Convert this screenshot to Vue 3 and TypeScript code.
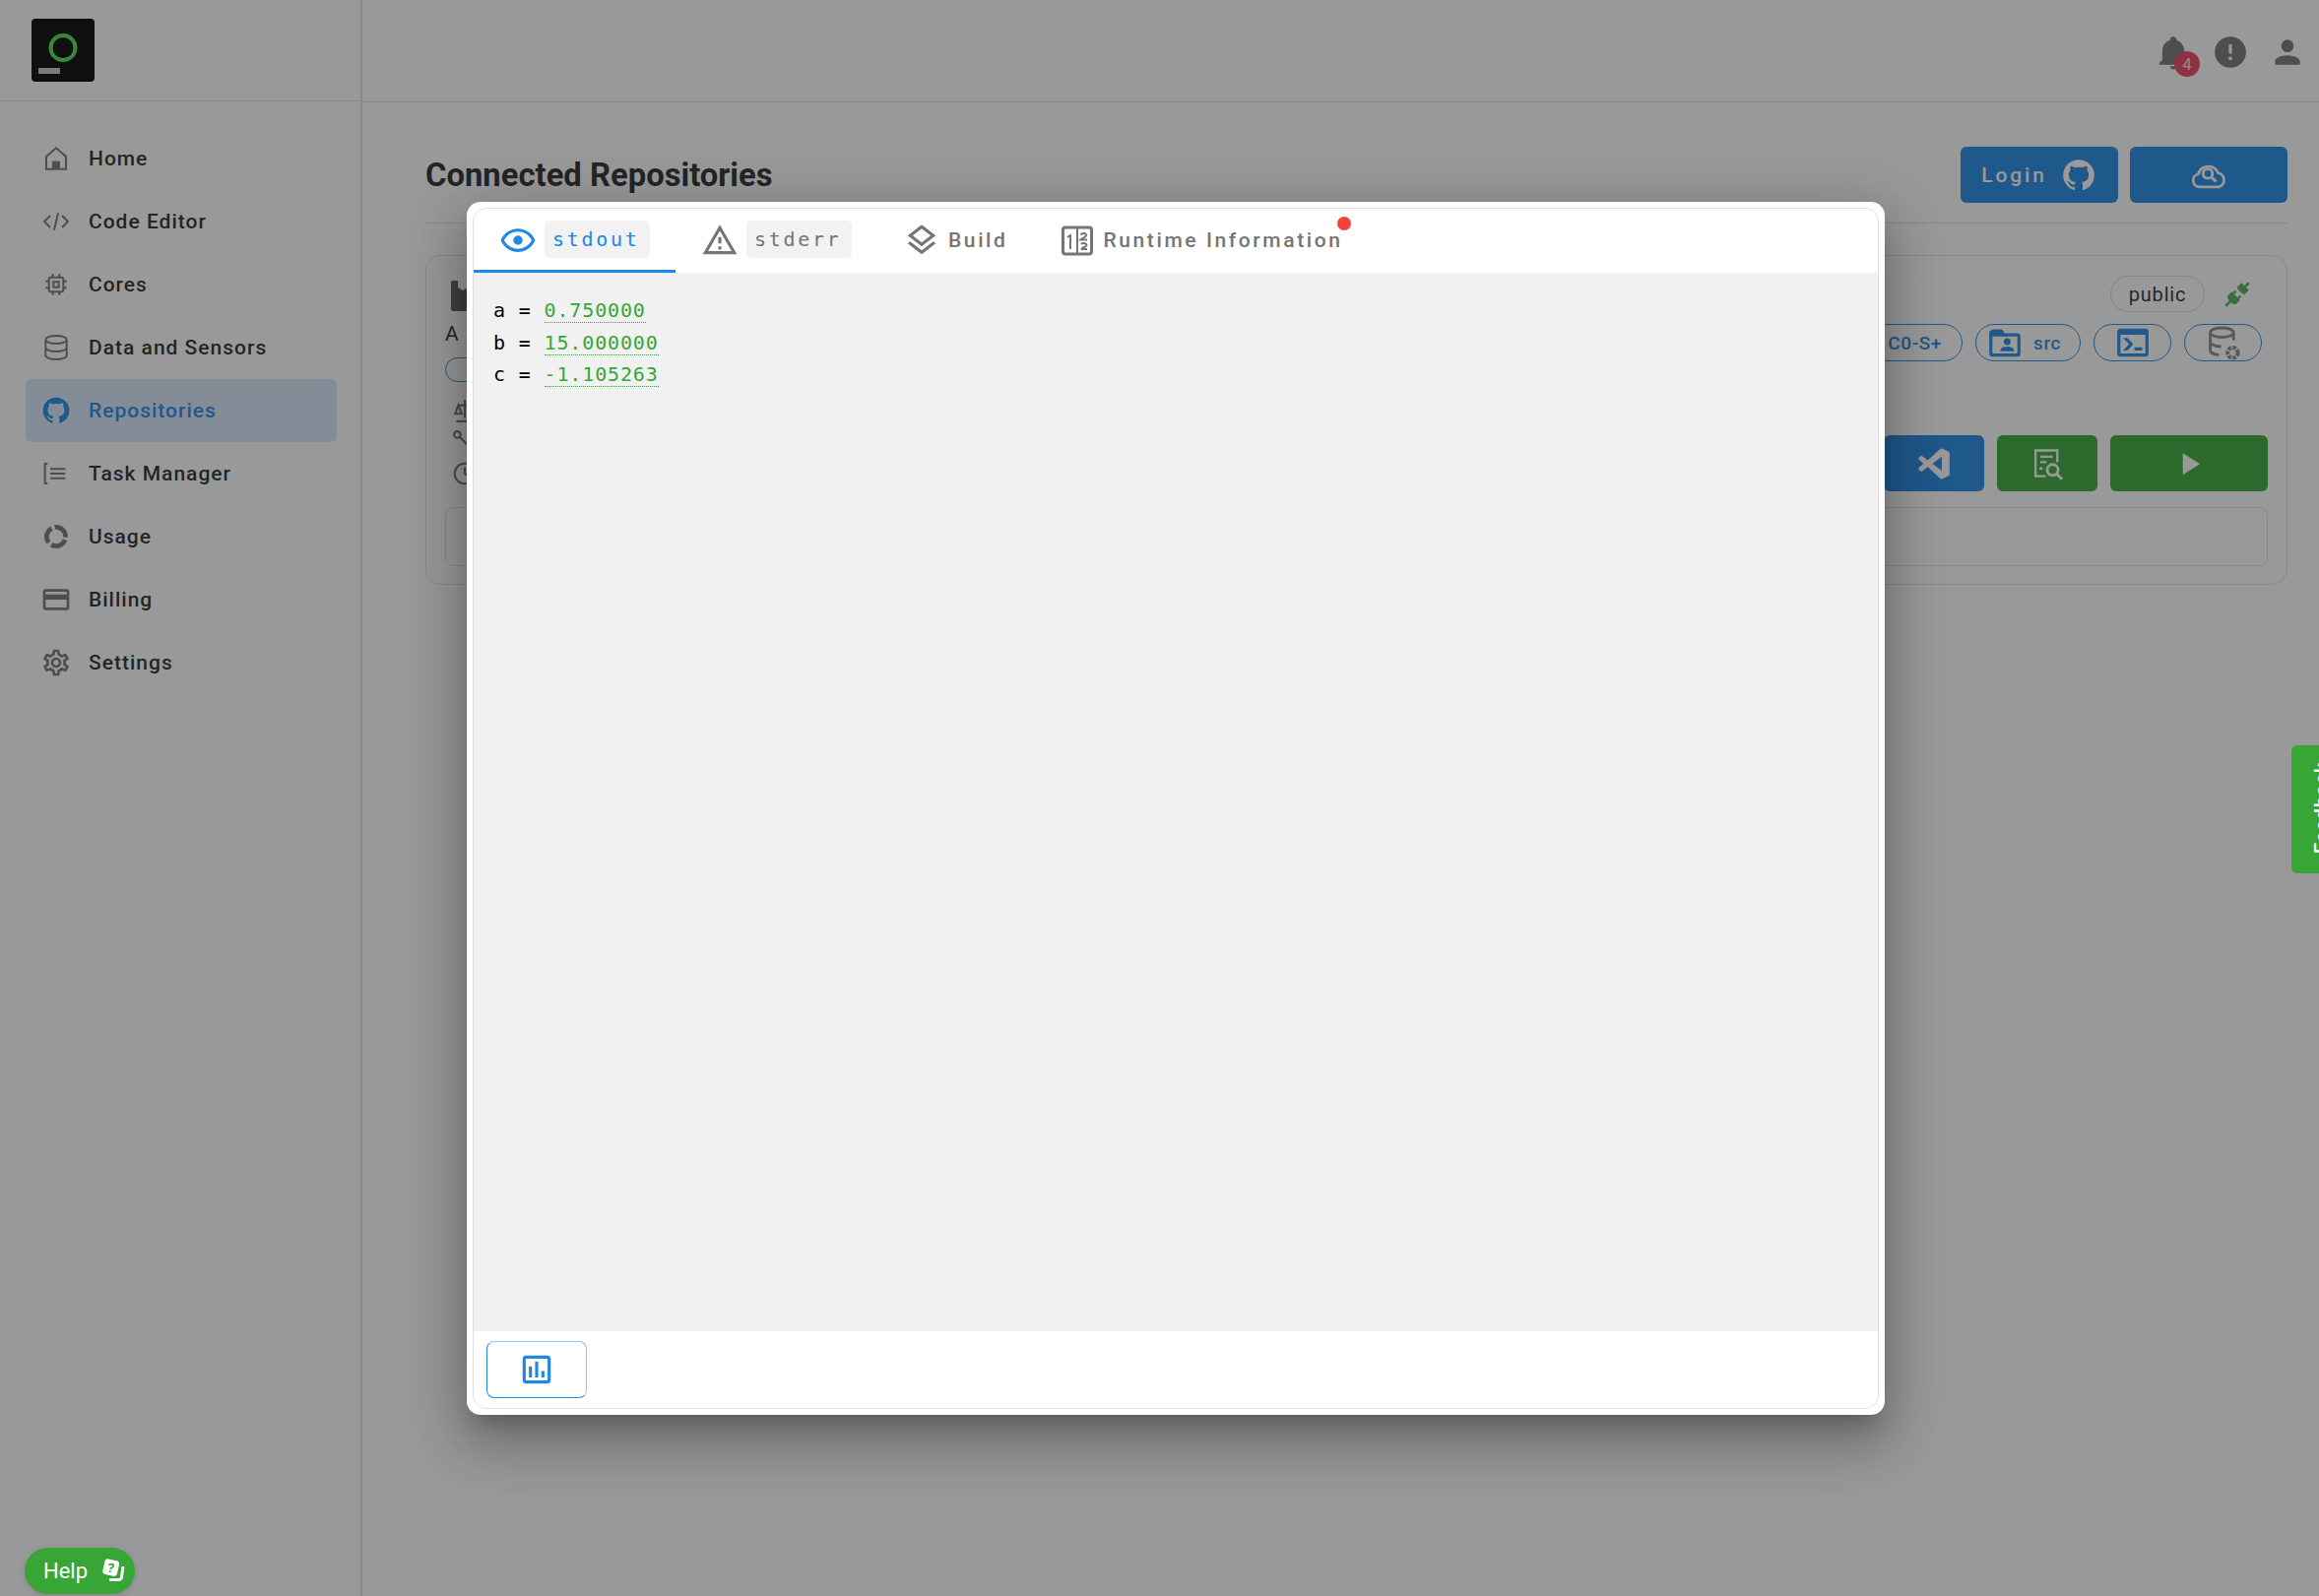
<script setup lang="ts">
interface NavItem { label: string; fill?: string; stroke?: string; active?: boolean; dash?: boolean }

const github = 'M12,2A10,10 0 0,0 2,12C2,16.42 4.87,20.17 8.84,21.5C9.34,21.58 9.5,21.27 9.5,21C9.5,20.77 9.5,20.14 9.5,19.31C6.73,19.91 6.14,17.97 6.14,17.97C5.68,16.81 5.03,16.5 5.03,16.5C4.12,15.88 5.1,15.9 5.1,15.9C6.1,15.97 6.63,16.93 6.63,16.93C7.5,18.45 8.97,18 9.54,17.76C9.63,17.11 9.89,16.67 10.17,16.42C7.95,16.17 5.62,15.31 5.62,11.5C5.62,10.39 6,9.5 6.65,8.79C6.55,8.54 6.2,7.5 6.75,6.15C6.75,6.15 7.59,5.88 9.5,7.17C10.29,6.95 11.15,6.84 12,6.84C12.85,6.84 13.71,6.95 14.5,7.17C16.41,5.88 17.25,6.15 17.25,6.15C17.8,7.5 17.45,8.54 17.35,8.79C18,9.5 18.38,10.39 18.38,11.5C18.38,15.32 16.04,16.16 13.81,16.41C14.17,16.72 14.5,17.33 14.5,18.26C14.5,19.6 14.5,20.68 14.5,21C14.5,21.27 14.66,21.59 15.17,21.5C19.14,20.16 22,16.42 22,12A10,10 0 0,0 12,2Z'

const nav: NavItem[] = [
  { label: 'Home', stroke: 'M4.5 20V10.5L12 4l7.5 6.5V20z', fill: 'M9 20v-6h6v6z' },
  { label: 'Code Editor', stroke: 'M7.5 7.5 3 12l4.5 4.5M16.5 7.5 21 12l-4.5 4.5M13.5 5.5l-3 13' },
  { label: 'Cores', stroke: 'M8 6.5h8a1.5 1.5 0 0 1 1.5 1.5v8a1.5 1.5 0 0 1-1.5 1.5H8A1.5 1.5 0 0 1 6.5 16V8A1.5 1.5 0 0 1 8 6.5zM10 10h4v4h-4zM9.5 6.5V4M14.5 6.5V4M9.5 20v-2.5M14.5 20v-2.5M4 9.5h2.5M4 14.5h2.5M17.5 9.5H20M17.5 14.5H20' },
  { label: 'Data and Sensors', stroke: 'M4 6c0-1.7 3.6-3 8-3s8 1.3 8 3-3.6 3-8 3-8-1.3-8-3zM4 6v12c0 1.7 3.6 3 8 3s8-1.3 8-3V6M4 12c0 1.7 3.6 3 8 3s8-1.3 8-3' },
  { label: 'Repositories', fill: github, active: true },
  { label: 'Task Manager', stroke: 'M5.5 4.5H3.5v15h2M7.5 8.5H19M7.5 12H19M7.5 15.5H19' },
  { label: 'Usage', dash: true },
  { label: 'Billing', fill: 'M20,8H4V6H20M20,18H4V12H20M20,4H4C2.89,4 2,4.89 2,6V18C2,19.11 2.89,20 4,20H20C21.11,20 22,19.11 22,18V6C22,4.89 21.11,4 20,4Z' },
  { label: 'Settings', fill: 'M12,8A4,4 0 0,1 16,12A4,4 0 0,1 12,16A4,4 0 0,1 8,12A4,4 0 0,1 12,8M12,10A2,2 0 0,0 10,12A2,2 0 0,0 12,14A2,2 0 0,0 14,12A2,2 0 0,0 12,10M10,22C9.75,22 9.54,21.82 9.5,21.58L9.13,18.93C8.5,18.68 7.96,18.34 7.44,17.94L4.95,18.95C4.73,19.03 4.46,18.95 4.34,18.73L2.34,15.27C2.21,15.05 2.27,14.78 2.46,14.63L4.57,12.97L4.5,12L4.57,11L2.46,9.37C2.27,9.22 2.21,8.95 2.34,8.73L4.34,5.27C4.46,5.05 4.73,4.96 4.95,5.05L7.44,6.05C7.96,5.66 8.5,5.32 9.13,5.07L9.5,2.42C9.54,2.18 9.75,2 10,2H14C14.25,2 14.46,2.18 14.5,2.42L14.87,5.07C15.5,5.32 16.04,5.66 16.56,6.05L19.05,5.05C19.27,4.96 19.54,5.05 19.66,5.27L21.66,8.73C21.79,8.95 21.73,9.22 21.54,9.37L19.43,11L19.5,12L19.43,13L21.54,14.63C21.73,14.78 21.79,15.05 21.66,15.27L19.66,18.73C19.54,18.95 19.27,19.04 19.05,18.95L16.56,17.95C16.04,18.34 15.5,18.68 14.87,18.93L14.5,21.58C14.46,21.82 14.25,22 14,22H10M11.25,4L10.88,6.61C9.68,6.86 8.62,7.5 7.85,8.39L5.44,7.35L4.69,8.65L6.8,10.2C6.4,11.37 6.4,12.64 6.8,13.8L4.68,15.36L5.43,16.66L7.86,15.62C8.63,16.5 9.68,17.14 10.87,17.38L11.24,20H12.76L13.13,17.39C14.32,17.14 15.37,16.5 16.14,15.62L18.57,16.66L19.32,15.36L17.2,13.81C17.6,12.64 17.6,11.37 17.2,10.2L19.31,8.65L18.56,7.35L16.15,8.39C15.38,7.5 14.32,6.86 13.12,6.62L12.75,4H11.25Z' },
]

const outputs = [
  { name: 'a', value: '0.750000' },
  { name: 'b', value: '15.000000' },
  { name: 'c', value: '-1.105263' },
]
</script>

<template>
  <div class="page">
    <aside class="sidebar">
      <div class="logo-bar">
        <svg class="logo" viewBox="0 0 64 64">
          <rect width="64" height="64" rx="4" fill="#000" />
          <circle cx="32" cy="29.500" r="12.500" fill="none" stroke="#4ae050" stroke-width="4" />
          <rect x="7" y="50" width="22" height="6" fill="#fff" opacity="0.8" />
        </svg>
      </div>
      <nav class="nav">
        <a v-for="item in nav" :key="item.label" class="nav-item" :class="{ active: item.active }">
          <svg class="nav-icon" viewBox="0 0 24 24">
            <path v-if="item.fill" :d="item.fill" fill="currentColor" />
            <path v-if="item.stroke" :d="item.stroke" fill="none" stroke="currentColor" stroke-width="1.5" />
            <circle v-if="item.dash" cx="12" cy="12" r="7.2" fill="none" stroke="currentColor" stroke-width="3.6" stroke-dasharray="12.6 2.5" transform="rotate(20 12 12)" />
          </svg>
          <span>{{ item.label }}</span>
        </a>
      </nav>
    </aside>

    <main class="main">
      <header class="topbar">
        <div class="bell">
          <svg class="top-icon" viewBox="0 0 24 24"><path fill="currentColor" d="M21,19V20H3V19L5,17V11C5,7.9 7.03,5.17 10,4.29C10,4.19 10,4.1 10,4A2,2 0 0,1 12,2A2,2 0 0,1 14,4C14,4.1 14,4.19 14,4.29C16.97,5.17 19,7.9 19,11V17L21,19M14,21A2,2 0 0,1 12,23A2,2 0 0,1 10,21" /></svg>
          <span class="badge">4</span>
        </div>
        <svg class="top-icon" viewBox="0 0 24 24"><path fill="currentColor" d="M13,13H11V7H13M13,17H11V15H13M12,2A10,10 0 0,0 2,12A10,10 0 0,0 12,22A10,10 0 0,0 22,12A10,10 0 0,0 12,2Z" /></svg>
        <svg class="top-icon" viewBox="0 0 24 24"><path fill="currentColor" d="M12,4A4,4 0 0,1 16,8A4,4 0 0,1 12,12A4,4 0 0,1 8,8A4,4 0 0,1 12,4M12,14C16.42,14 20,15.79 20,18V20H4V18C4,15.79 7.58,14 12,14Z" /></svg>
      </header>

      <section class="content">
        <div class="title-row">
          <h1>Connected Repositories</h1>
          <div class="title-actions">
            <button class="btn primary">
              <span class="btn-label">Login</span>
              <svg class="btn-icon" viewBox="0 0 24 24"><path fill="currentColor" :d="github" /></svg>
            </button>
            <button class="btn primary">
              <svg class="btn-icon" viewBox="0 0 24 24">
                <path fill="none" stroke="currentColor" stroke-width="1.700" d="M6.300 19.500a4.200 4.200 0 0 1-1-8.300 6.800 6.800 0 0 1 12.800-.600 4.600 4.600 0 0 1 .4 8.900z" />
                <circle cx="11.400" cy="11" r="3" fill="none" stroke="currentColor" stroke-width="1.800" />
                <path stroke="currentColor" stroke-width="2" d="m13.600 13.200 3.200 2.800" />
              </svg>
            </button>
          </div>
        </div>

        <article class="repo">
          <div class="repo-main">
            <div class="repo-left">
              <svg class="repo-mark" viewBox="0 0 24 31"><path fill="#5c5c5c" d="M0 2a2 2 0 0 1 2-2h5v7l5 3 5-3V0h5v31H2a2 2 0 0 1-2-2z" /></svg>
              <div class="repo-desc">A</div>
              <div class="mini-chip"></div>
              <div class="meta-icons">
                <svg viewBox="0 0 24 24"><path fill="none" stroke="currentColor" stroke-width="2" d="M4 22h18M12 2v17M6 7h12M6 7l-3 8h6zM18 7l-3 8h6z" /></svg>
                <svg viewBox="0 0 24 24"><circle cx="5" cy="5" r="3" fill="none" stroke="currentColor" stroke-width="2" /><circle cx="19" cy="19" r="3" fill="none" stroke="currentColor" stroke-width="2" /><path stroke="currentColor" stroke-width="2" d="m7 7 10 10" /></svg>
                <svg viewBox="0 0 24 24"><circle cx="12" cy="12" r="9.500" fill="none" stroke="currentColor" stroke-width="2" /><path fill="none" stroke="currentColor" stroke-width="2" d="M12 6v6l4 3" /></svg>
              </div>
            </div>
            <div class="repo-right">
              <div class="row-status">
                <span class="public">public</span>
                <svg class="plug" viewBox="0 0 24 24">
                  <g transform="rotate(45 12 12)" fill="#4caf50">
                    <path d="M11 -0.500h2v4h3v3.500a2 2 0 0 1-2 2h-4a2 2 0 0 1-2-2v-3.500h3z" />
                    <path d="M8.500 11h1.800v2.500h3.400V11h1.800v2.500H16.500v3.500a2.500 2.500 0 0 1-2.500 2.500h-1v5h-2v-5h-1A2.500 2.500 0 0 1 7.500 17v-3.500h1z" />
                  </g>
                </svg>
              </div>
              <div class="row-chips">
                <span class="pill board">C0-S+</span>
                <span class="pill folder">
                  <svg class="pill-icon" viewBox="0 0 24 24">
                    <path fill="currentColor" fill-rule="evenodd" d="M4 3.500h6l2 2.500h8a2 2 0 0 1 2 2v11a2 2 0 0 1-2 2H4a2 2 0 0 1-2-2v-13a2 2 0 0 1 2-2zM4 8v11h16V8z" />
                    <circle cx="13.500" cy="11.300" r="2.200" fill="currentColor" />
                    <path fill="currentColor" d="M9 17.500c0-2 2-3 4.500-3s4.500 1 4.500 3z" />
                  </svg>
                  <span>src</span>
                </span>
                <span class="pill icon-only">
                  <svg class="pill-icon" viewBox="0 0 24 24"><path fill="currentColor" d="M20,19V7H4V19H20M20,3A2,2 0 0,1 22,5V19A2,2 0 0,1 20,21H4A2,2 0 0,1 2,19V5C2,3.89 2.9,3 4,3H20M13,17V15H18V17H13M9.58,13L5.57,9H8.4L11.7,12.3C12.09,12.69 12.09,13.33 11.7,13.72L8.42,17H5.59L9.58,13Z" /></svg>
                </span>
                <span class="pill icon-only">
                  <svg class="pill-icon grey" viewBox="0 0 24 24">
                    <path fill="none" stroke="currentColor" stroke-width="1.800" d="M3.500 5.500c0-1.700 3.300-3 7.500-3s7.500 1.300 7.500 3-3.300 3-7.500 3-7.500-1.300-7.500-3zM3.500 5.500v11.500c0 1.400 2.300 2.600 5.500 2.900M18.500 5.500v5M3.500 11.500c0 1.600 3 2.900 7 3" />
                    <circle cx="18" cy="18.500" r="3.300" fill="none" stroke="currentColor" stroke-width="2.600" stroke-dasharray="2.200 .8" />
                  </svg>
                </span>
              </div>
              <div class="row-actions">
                <button class="btn small primary">
                  <svg class="btn-icon" viewBox="0 0 24 24"><path fill="currentColor" d="M17 16.470V7.390L11 11.930M2.220 9.190A.71 .71 0 0 1 2.290 8.270L3.500 7.170C3.700 7 4.190 6.920 4.550 7.170L8 9.790L16 2.470C16.320 2.150 16.870 2 17.500 2.330L21.500 4.230C21.860 4.440 22 4.850 22 5.130V18.870C22 19.050 21.910 19.500 21.540 19.780L17.500 21.670C17 21.890 16.500 21.770 16 21.530L8 14.100L4.550 16.750C4.170 17.080 3.700 17 3.500 16.830L2.290 15.740C2 15.360 2 14.810 2.290 14.550L5.290 11.930" /></svg>
                </button>
                <button class="btn small success">
                  <svg class="btn-icon" viewBox="0 0 24 24">
                    <path fill="none" stroke="currentColor" stroke-width="1.500" d="M11 20H4.500V3.500h14V11M7.500 7.500h8M7.500 11h4M7 15h2" />
                    <circle cx="15.500" cy="16" r="3.500" fill="none" stroke="currentColor" stroke-width="1.800" />
                    <path stroke="currentColor" stroke-width="1.800" d="m18 18.500 3.500 3.500" />
                  </svg>
                </button>
                <button class="btn success">
                  <svg class="btn-icon" viewBox="0 0 24 24"><path fill="currentColor" d="M8,5.140V19.140L19,12.140L8,5.140Z" /></svg>
                </button>
              </div>
            </div>
          </div>
          <div class="repo-box"></div>
        </article>
      </section>
    </main>

    <div class="scrim"></div>

    <div class="dialog">
      <div class="dialog-card">
        <div class="tabs">
          <div class="tab current">
            <svg class="tab-icon" viewBox="0 0 24 24"><path fill="currentColor" d="M12,9A3,3 0 0,1 15,12A3,3 0 0,1 12,15A3,3 0 0,1 9,12A3,3 0 0,1 12,9M12,4.500C17,4.500 21.270,7.610 23,12C21.270,16.390 17,19.500 12,19.500C7,19.500 2.730,16.390 1,12C2.730,7.610 7,4.500 12,4.500M3.180,12C4.830,15.360 8.240,17.500 12,17.500C15.760,17.500 19.170,15.360 20.820,12C19.170,8.640 15.760,6.500 12,6.500C8.240,6.500 4.830,8.640 3.180,12Z" /></svg>
            <span class="mono-chip">stdout</span>
          </div>
          <div class="tab">
            <svg class="tab-icon" viewBox="0 0 24 24"><path fill="currentColor" d="M12,2L1,21H23M12,6L19.530,19H4.470M11,10V14H13V10M11,16V18H13V16" /></svg>
            <span class="mono-chip">stderr</span>
          </div>
          <div class="tab">
            <svg class="tab-icon" viewBox="0 0 24 24"><path fill="currentColor" d="M12,18.540L19.370,12.800L21,14.070L12,21.070L3,14.070L4.620,12.810L12,18.540M12,16L3,9L12,2L21,9L12,16M12,4.530L6.260,9L12,13.470L17.740,9L12,4.530Z" /></svg>
            <span class="tab-text">Build</span>
          </div>
          <div class="tab runtime">
            <svg class="runtime-icon" viewBox="0 0 32 32">
              <rect x="1.500" y="3" width="29" height="27" rx="2.500" fill="none" stroke="currentColor" stroke-width="3" />
              <path fill="none" stroke="currentColor" stroke-width="2" d="M16 4v25M6 13l3-2v14M19.500 10.500c1-2 5.500-2 5.500.5 0 1.500-4 3-5.500 4.500H26M20 20c1.500-1.500 5.500-1 5.500 1s-5 2-5 4h5.500" />
            </svg>
            <span class="tab-text">Runtime Information</span>
            <span class="dot"></span>
          </div>
        </div>

        <div class="console">
          <div v-for="line in outputs" :key="line.name" class="console-line">
            <span>{{ line.name }} = </span><span class="value">{{ line.value }}</span>
          </div>
        </div>

        <div class="dialog-foot">
          <button class="chart-btn">
            <svg viewBox="0 0 24 24"><path fill="currentColor" d="M9 17H7V10H9V17M13 17H11V7H13V17M17 17H15V13H17V17M19 19H5V5H19V19.100M19 3H5C3.900 3 3 3.900 3 5V19C3 20.100 3.900 21 5 21H19C20.100 21 21 20.100 21 19V5C21 3.900 20.100 3 19 3Z" /></svg>
          </button>
        </div>
      </div>
    </div>

    <button class="help">
      <span>Help</span>
      <svg viewBox="0 0 26 26">
        <g transform="rotate(12 10 10)">
          <rect x="3" y="1" width="15" height="16" rx="3.500" fill="#fff" />
          <text x="10.500" y="14" text-anchor="middle" class="help-q">?</text>
        </g>
        <path fill="none" stroke="#fff" stroke-width="3" d="M23 8l-1.500 11c-.3 1.500-1 2.500-3 2.500H9" />
      </svg>
    </button>

    <div class="feedback"><span>Feedback</span></div>
  </div>
</template>

<style>
html, body { margin: 0; background: #fff; overflow: hidden; }
</style>

<style scoped>
.page {
  position: relative;
  display: grid;
  grid-template-columns: 368px 1fr;
  width: 2355px;
  height: 1621px;
  overflow: hidden;
  background: #fff;
  color: rgba(0, 0, 0, 0.87);
  font-family: Roboto, "Liberation Sans", sans-serif;
}
.sidebar { border-right: 2px solid rgba(0, 0, 0, 0.12); }
.logo-bar {
  height: 103px;
  box-sizing: border-box;
  padding: 19px 0 0 32px;
  border-bottom: 1px solid rgba(0, 0, 0, 0.12);
}
.logo { display: block; width: 64px; height: 64px; }
.nav { display: flex; flex-direction: column; padding: 26px 24px 0 26px; }
.nav-item {
  display: flex;
  align-items: center;
  gap: 17px;
  height: 64px;
  padding-left: 15px;
  border-radius: 6px;
  font-size: 21px;
  font-weight: 500;
  letter-spacing: 1px;
}
.nav-icon { width: 32px; height: 32px; color: #757575; flex: none; }
.nav-item.active { background: #d7e8fb; color: #1e88e5; }
.nav-item.active .nav-icon { color: #1e88e5; }

.main { display: flex; flex-direction: column; min-width: 0; }
.topbar {
  display: flex;
  justify-content: flex-end;
  align-items: center;
  gap: 20px;
  height: 104px;
  box-sizing: border-box;
  padding: 2px 13px 0 0;
  border-bottom: 1px solid rgba(0, 0, 0, 0.12);
  color: #757575;
}
.top-icon { display: block; width: 38px; height: 38px; }
.bell { position: relative; }
.badge {
  position: absolute;
  left: 20px;
  top: 18px;
  width: 26px;
  height: 26px;
  border-radius: 50%;
  background: #ed4362;
  color: rgba(255, 255, 255, 0.8);
  font-size: 17px;
  line-height: 26px;
  text-align: center;
}
.content { display: flex; flex-direction: column; padding: 45px 32px 0 64px; }
.title-row {
  display: flex;
  justify-content: space-between;
  align-items: center;
  padding-bottom: 20px;
  border-bottom: 1px solid rgba(0, 0, 0, 0.12);
}
h1 { margin: 0; font-size: 32.8px; font-weight: 700; letter-spacing: 0; }
.title-actions { display: flex; gap: 12px; }
.btn {
  display: flex;
  align-items: center;
  justify-content: center;
  gap: 13px;
  width: 160px;
  height: 57px;
  padding: 0;
  border: 0;
  border-radius: 6px;
  color: #fff;
  font-family: inherit;
}
.btn.primary { background: #1e88e5; }
.btn.success { background: #37a637; }
.btn.small { width: 102px; }
.btn-label { font-size: 21px; font-weight: 500; letter-spacing: 2.9px; }
.btn-icon { width: 38px; height: 38px; }

.repo {
  margin-top: 32px;
  padding: 20px 19px 19px;
  border: 1px solid rgba(0, 0, 0, 0.12);
  border-radius: 16px;
  height: 335px;
  box-sizing: border-box;
}
.repo-main { display: flex; justify-content: space-between; height: 235px; }
.repo-left { display: flex; flex-direction: column; align-items: flex-start; padding-top: 5px; }
.repo-mark { width: 24px; height: 31px; margin-left: 6px; }
.repo-desc { margin-top: 10px; font-size: 21px; line-height: 26px; }
.mini-chip { width: 120px; height: 25px; margin-top: 11px; border: 1px solid #1e88e5; border-radius: 13px; box-sizing: border-box; }
.meta-icons { display: flex; flex-direction: column; gap: 6px; margin: 16px 0 0 7px; color: #757575; }
.meta-icons svg { display: block; width: 26px; height: 26px; }
.repo-right { display: flex; flex-direction: column; align-items: flex-end; }
.row-status { display: flex; align-items: center; gap: 17px; padding-right: 15px; height: 37px; }
.public {
  display: flex;
  align-items: center;
  justify-content: center;
  width: 96px;
  height: 37px;
  box-sizing: border-box;
  border: 1px solid rgba(0, 0, 0, 0.15);
  border-radius: 19px;
  font-size: 20px;
  letter-spacing: 0.8px;
}
.plug { width: 32px; height: 32px; overflow: visible; }
.row-chips { display: flex; gap: 13px; margin-top: 12px; padding-right: 6px; }
.pill {
  display: flex;
  align-items: center;
  justify-content: center;
  gap: 10px;
  height: 38px;
  box-sizing: border-box;
  border: 1px solid #1e88e5;
  border-radius: 19px;
  color: #1e88e5;
  font-size: 18px;
  font-weight: 500;
  letter-spacing: 0.6px;
}
.pill.board { width: 180px; justify-content: flex-end; padding-right: 20px; font-size: 19px; }
.pill.folder { width: 107px; justify-content: flex-start; padding-left: 10px; font-size: 19px; }
.pill.icon-only { width: 79px; }
.pill-icon { width: 38px; height: 38px; }
.pill-icon.grey { color: #8a8a8a; }
.row-actions { display: flex; gap: 13px; margin-top: 75px; }
.repo-box {
  height: 60px;
  box-sizing: border-box;
  border: 1px solid rgba(0, 0, 0, 0.12);
  border-radius: 8px;
}

.scrim { position: absolute; inset: 0; background: rgba(33, 33, 33, 0.46); }

.dialog {
  position: absolute;
  left: 474px;
  top: 205px;
  width: 1440px;
  height: 1232px;
  box-sizing: border-box;
  padding: 6px;
  background: #fff;
  border-radius: 14px;
  box-shadow: 0 15px 20px -9px rgba(0, 0, 0, 0.2), 0 32px 51px 4px rgba(0, 0, 0, 0.16), 0 12px 61px 11px rgba(0, 0, 0, 0.16);
}
.dialog-card {
  display: flex;
  flex-direction: column;
  height: 100%;
  box-sizing: border-box;
  border: 1px solid #e0e0e0;
  border-radius: 14px;
  overflow: hidden;
}
.tabs { display: flex; height: 65px; flex: none; }
.tab {
  position: relative;
  display: flex;
  align-items: center;
  gap: 8px;
  padding: 2px 26px 0;
  color: #757575;
  box-sizing: border-box;
  border-bottom: 3px solid transparent;
}
.tab.current { color: #1e88e5; border-bottom-color: #1e88e5; }
.tab-icon { width: 38px; height: 38px; flex: none; }
.runtime-icon { width: 32px; height: 32px; margin: 0 2px 0 3px; flex: none; }
.mono-chip {
  display: block;
  width: 107px;
  height: 38px;
  box-sizing: border-box;
  padding-left: 8px;
  margin-top: -2px;
  background: #f2f2f2;
  border-radius: 5px;
  font-family: "DejaVu Sans Mono", "Liberation Mono", monospace;
  font-size: 20px;
  line-height: 38px;
  letter-spacing: 2.7px;
}
.tab-text { font-size: 21px; font-weight: 500; letter-spacing: 2.6px; white-space: nowrap; margin-top: -1px; }
.dot {
  position: absolute;
  right: 18px;
  top: 8px;
  width: 14px;
  height: 14px;
  border-radius: 50%;
  background: #f44336;
}
.console {
  flex: 1;
  padding: 22px 20px;
  background: #f1f1f1;
  color: #000;
  font-family: "DejaVu Sans Mono", "Liberation Mono", monospace;
  font-size: 20px;
  letter-spacing: 0.85px;
  line-height: 32.6px;
}
.console-line { white-space: pre; height: 32.6px; }
.value { color: #37a637; border-bottom: 1px dotted #37a637; }
.dialog-foot { flex: none; height: 78px; box-sizing: border-box; padding: 10px 13px 0; background: #fff; }
.chart-btn {
  display: flex;
  align-items: center;
  justify-content: center;
  width: 102px;
  height: 58px;
  padding: 0;
  background: #fff;
  border: 1px solid;
  border-color: #8ec2f1 #8ec2f1 #1e88e5 #1e88e5;
  border-radius: 8px;
  color: #1e88e5;
}
.chart-btn svg { width: 38px; height: 38px; }

.help {
  position: absolute;
  left: 25px;
  top: 1572px;
  display: flex;
  align-items: center;
  gap: 13px;
  width: 112px;
  height: 47px;
  box-sizing: border-box;
  padding: 0 0 0 19px;
  border: 0;
  border-radius: 24px;
  background: #37a637;
  color: #fff;
  font-family: Roboto, "Liberation Sans", sans-serif;
  font-size: 22px;
  box-shadow: 0 2px 6px rgba(0, 0, 0, 0.12);
}
.help svg { width: 26px; height: 26px; overflow: visible; }
.help-q { font: 700 13px Roboto, sans-serif; fill: #37a637; }
.feedback {
  position: absolute;
  right: 0;
  top: 757px;
  width: 28px;
  height: 130px;
  overflow: hidden;
  border-radius: 6px 0 0 6px;
  background: #37a637;
}
.feedback span {
  position: absolute;
  left: 19px;
  bottom: 20px;
  writing-mode: vertical-rl;
  transform: rotate(180deg);
  color: #fff;
  font-size: 20.5px;
  font-weight: 500;
  letter-spacing: 0.6px;
  line-height: 24px;
  white-space: nowrap;
}
</style>
